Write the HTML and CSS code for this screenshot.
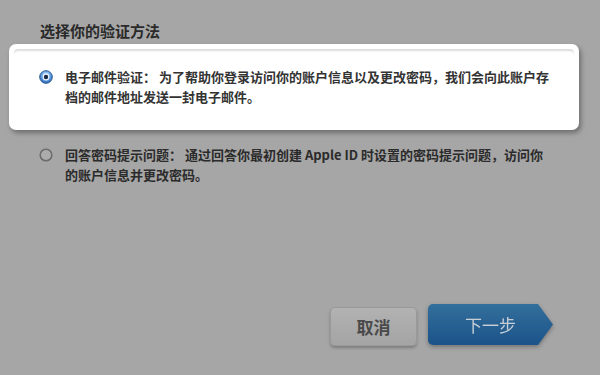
FILE: index.html
```html
<!DOCTYPE html>
<html lang="zh-CN">
<head>
<meta charset="utf-8">
<title>选择你的验证方法</title>
<link rel="stylesheet" href="styles.css">
</head>
<body>
<div class="page">
  <h1 class="title">选择你的验证方法</h1>
  <div class="card">
    <div class="card-inner">
      <label class="option">
        <svg class="radio" width="14" height="14" viewBox="0 0 14 14">
          <defs>
            <radialGradient id="rb" cx="50%" cy="35%" r="65%">
              <stop offset="0" stop-color="#d8ecff"/>
              <stop offset="0.5" stop-color="#6aa7ea"/>
              <stop offset="1" stop-color="#2a66b6"/>
            </radialGradient>
          </defs>
          <circle cx="7" cy="7" r="6.3" fill="url(#rb)" stroke="#2d5a8e" stroke-width="1"/>
          <circle cx="7" cy="7" r="3.4" fill="#eef6ff"/>
          <circle cx="7" cy="7" r="2.2" fill="#1a2a44"/>
        </svg>
        <span class="text">电子邮件验证： 为了帮助你登录访问你的账户信息以及更改密码，我们会向此账户存<br>档的邮件地址发送一封电子邮件。</span>
      </label>
    </div>
  </div>
  <label class="option option-plain">
    <svg class="radio" width="14" height="14" viewBox="0 0 14 14">
      <circle cx="7" cy="7" r="5.8" fill="#acacac" stroke="#6c6c6c" stroke-width="1.6"/>
    </svg>
    <span class="text">回答密码提示问题： 通过回答你最初创建 Apple ID 时设置的密码提示问题，访问你<br>的账户信息并更改密码。</span>
  </label>
  <div class="actions">
    <button class="btn btn-cancel" type="button">取消</button>
    <div class="next-wrap">
      <button class="btn btn-next" type="button">下一步</button>
    </div>
  </div>
</div>
</body>
</html>
```
FILE: styles.css
```css
html, body {
  margin: 0;
  padding: 0;
}
body {
  background: #a6a6a6;
  width: 600px;
  height: 375px;
  overflow: hidden;
  font-family: "Noto Sans CJK SC", "Liberation Sans", sans-serif;
  color: #2e2e2e;
}
.page {
  display: flex;
  flex-direction: column;
  padding: 20px 21px 0 9px;
}
.title {
  margin: 0 0 3px 31px;
  font-size: 15px;
  line-height: 21px;
  font-weight: 700;
  color: #2a2a2a;
}
.card {
  background: #fff;
  border-radius: 7px;
  padding: 5px;
  box-shadow: 2px 3px 5px rgba(0, 0, 0, 0.35);
}
.card-inner {
  border-radius: 4px;
  box-shadow: inset 0 3px 2px -1px rgba(0, 0, 0, 0.14);
  padding: 18px 0 18px 0;
}
.option {
  display: flex;
  align-items: flex-start;
  gap: 12px;
  padding-left: 25px;
  font-size: 13px;
  line-height: 20px;
  font-weight: 700;
  color: #333;
}
.option .radio {
  flex: none;
  margin-top: 3px;
}
.option-plain {
  margin-top: 15px;
  padding-left: 30px;
  color: #2b2b2b;
}
.actions {
  display: flex;
  justify-content: flex-end;
  align-items: flex-start;
  gap: 11px;
  margin-top: 119px;
  margin-right: 26px;
}
.btn {
  font-family: "Noto Sans CJK SC", "Liberation Sans", sans-serif;
  font-size: 17px;
  font-weight: 700;
  border: none;
  padding: 0;
  cursor: pointer;
}
.btn-cancel {
  margin-top: 3px;
  width: 87px;
  height: 39px;
  border-radius: 5px;
  border: 1px solid #999;
  background: linear-gradient(#b2b2b2, #a4a4a4);
  color: #4a4a4a;
  box-shadow: 0 2px 3px rgba(0, 0, 0, 0.25);
}
.next-wrap {
  filter: drop-shadow(0 2px 2px rgba(0, 0, 0, 0.3));
}
.btn-next {
  display: block;
  width: 125px;
  height: 41px;
  border-radius: 5px;
  background: linear-gradient(#336f9b, #1b538a);
  color: #c9cfd6;
  font-weight: 400;
  clip-path: polygon(0 0, 88% 0, 100% 50%, 88% 100%, 0 100%);
}
```
